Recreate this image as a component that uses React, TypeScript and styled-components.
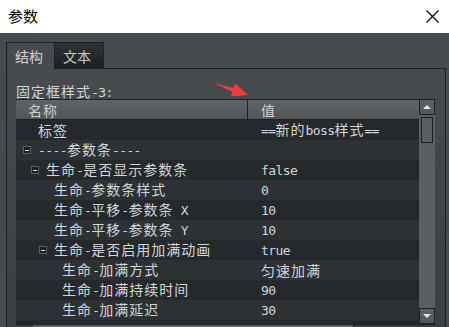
import React from 'react';
import styled, { createGlobalStyle } from 'styled-components';

const GlobalStyle = createGlobalStyle`
  html, body {
    margin: 0;
    padding: 0;
    background: #484b4e;
    overflow: hidden;
  }
`;

const Root = styled.div`
  position: relative;
  width: 449px;
  height: 327px;
  display: flex;
  flex-direction: column;
  overflow: hidden;
  background: #484b4e;
`;

const TitleBar = styled.div`
  height: 33px;
  flex: none;
  display: flex;
  align-items: center;
  justify-content: space-between;
  padding: 0 10px 0 8px;
  background: #fff;
`;

const Title = styled.span`
  font-family: 'Noto Sans CJK SC', sans-serif;
  font-size: 15px;
  color: #000;
  margin-top: -3px;
`;

const Body = styled.div`
  flex: 1;
  display: flex;
  flex-direction: column;
  padding: 9px 3px 0 6px;
  min-height: 0;
`;

const Tabs = styled.div`
  display: flex;
  align-items: flex-end;
  position: relative;
  z-index: 1;
`;

const Tab = styled.div<{ $active?: boolean }>`
  box-sizing: border-box;
  width: 49px;
  height: ${(p) => (p.$active ? 27 : 26)}px;
  margin-bottom: ${(p) => (p.$active ? -1 : 0)}px;
  padding-left: 8px;
  display: flex;
  align-items: center;
  border: 1px solid #1e2022;
  border-bottom: none;
  border-left-width: ${(p) => (p.$active ? 1 : 0)}px;
  background: ${(p) =>
    p.$active ? '#484b4e' : 'linear-gradient(#303336, #1d2022)'};
  font-family: 'Noto Sans CJK SC', sans-serif;
  font-size: 14px;
  color: ${(p) => (p.$active ? '#cfd2d5' : '#c6c9cc')};
`;

const Panel = styled.div`
  flex: 1;
  display: flex;
  flex-direction: column;
  padding: 15px 10px 0 9px;
  border: 1px solid #1e2022;
  border-bottom: none;
  background: linear-gradient(#484b4e, #3c3f42);
  min-height: 0;
`;

const Caption = styled.div`
  line-height: 15px;
  height: 15px;
  color: #d2d5d8;
  white-space: nowrap;
`;

const Table = styled.div`
  display: flex;
  flex-direction: column;
  width: 419px;
`;

const Viewport = styled.div`
  display: flex;
  height: 225px;
`;

const Main = styled.div`
  width: 403px;
  overflow: hidden;
  display: flex;
  flex-direction: column;
  background: #26292b;
`;

const HeaderRow = styled.div`
  flex: none;
  box-sizing: border-box;
  height: 21px;
  display: flex;
  border-top: 1px solid #1e2022;
  border-bottom: 1px solid #1e2022;
  background: linear-gradient(#616467, #525558);
`;

const HeadCell = styled.div<{ $width?: number; $pad: number }>`
  box-sizing: border-box;
  width: ${(p) => (p.$width ? `${p.$width}px` : 'auto')};
  flex: ${(p) => (p.$width ? 'none' : 1)};
  padding-left: ${(p) => p.$pad}px;
  display: flex;
  align-items: center;
  border-right: ${(p) => (p.$width ? '1px solid #1e2022' : 'none')};
  font-family: 'Noto Sans CJK SC', sans-serif;
  font-size: 14px;
  letter-spacing: 1px;
  color: #cdd0d3;
`;

const Row = styled.div<{ $alt: boolean }>`
  flex: none;
  height: 20px;
  display: flex;
  align-items: center;
  background: ${(p) => (p.$alt ? '#2e3134' : '#26292b')};
  color: #d2d6da;
  white-space: pre;
`;

const NameCell = styled.div<{ $depth: number }>`
  box-sizing: border-box;
  width: 232px;
  flex: none;
  display: flex;
  align-items: center;
  padding-left: ${(p) => 7 + p.$depth * 8}px;
`;

const Slot = styled.span`
  width: 15px;
  flex: none;
  display: flex;
  align-items: center;
`;

const Expander = styled.span`
  box-sizing: border-box;
  width: 8px;
  height: 8px;
  border: 1px solid #5d6063;
  background: #1b1d1f;
  display: flex;
  align-items: center;
  justify-content: center;
  &::after {
    content: '';
    width: 4px;
    height: 1px;
    background: #e6e6e6;
  }
`;

const Label = styled.span`
  line-height: 20px;
`;

const ValueCell = styled.div`
  flex: 1;
  padding-left: 13px;
  line-height: 20px;
`;

const Latin = styled.span`
  font-family: 'DejaVu Sans Mono', monospace;
  font-size: 13px;
  letter-spacing: -0.6px;
`;

const Han = styled.span`
  font-family: 'Noto Sans CJK SC', sans-serif;
  font-size: 14px;
  letter-spacing: 1px;
`;

const VScroll = styled.div`
  width: 16px;
  display: flex;
  flex-direction: column;
  background: #5c5f62;
`;

const ScrollButton = styled.div`
  box-sizing: border-box;
  width: 16px;
  height: 16px;
  flex: none;
  display: flex;
  align-items: center;
  justify-content: center;
  border: 1px solid #1e2022;
  background: linear-gradient(#5f6265, #54575a);
`;

const Arrowhead = styled.span<{ $down?: boolean }>`
  width: 0;
  height: 0;
  border-left: 4px solid transparent;
  border-right: 4px solid transparent;
  ${(p) =>
    p.$down ? 'border-top: 4px solid #e8e8e8;' : 'border-bottom: 4px solid #e8e8e8;'}
`;

const Track = styled.div`
  flex: 1;
  padding: 2px 2px 0;
`;

const Thumb = styled.div`
  box-sizing: border-box;
  height: 26px;
  border: 1px solid #1b1d1f;
  background: #5c5f62;
`;

const HScroll = styled.div`
  height: 16px;
  display: flex;
  border-top: 1px solid #1e2022;
  background: #3a3d40;
`;

const HThumb = styled.div`
  width: 320px;
  margin-left: 17px;
  background: #5c5f62;
  border-right: 1px solid #1e2022;
`;

const ArrowMark = styled.svg`
  position: absolute;
  left: 212px;
  top: 80px;
  pointer-events: none;
`;

const Mixed = ({ text }: { text: string }) => (
  <>
    {text
      .split(/([\x20-\x7e]+)/)
      .filter(Boolean)
      .map((part, i) =>
        /^[\x20-\x7e]+$/.test(part) ? (
          <Latin key={i}>{part}</Latin>
        ) : (
          <Han key={i}>{part}</Han>
        )
      )}
  </>
);

interface Param {
  name: string;
  value: string;
  depth: number;
  open?: boolean;
}

const params: Param[] = [
  { name: '标签', value: '==新的boss样式==', depth: 0 },
  { name: '----参数条----', value: '', depth: 0, open: true },
  { name: '生命-是否显示参数条', value: 'false', depth: 1, open: true },
  { name: '生命-参数条样式', value: '0', depth: 2 },
  { name: '生命-平移-参数条 X', value: '10', depth: 2 },
  { name: '生命-平移-参数条 Y', value: '10', depth: 2 },
  { name: '生命-是否启用加满动画', value: 'true', depth: 2, open: true },
  { name: '生命-加满方式', value: '匀速加满', depth: 3 },
  { name: '生命-加满持续时间', value: '90', depth: 3 },
  { name: '生命-加满延迟', value: '30', depth: 3 },
  { name: '', value: '', depth: 3 },
];

export default function App() {
  return (
    <Root>
      <GlobalStyle />
      <TitleBar>
        <Title>参数</Title>
        <svg width="13" height="13" viewBox="0 0 13 13">
          <path d="M0.5 0.5L12.5 12.5M12.5 0.5L0.5 12.5" stroke="#000" strokeWidth="1.2" />
        </svg>
      </TitleBar>
      <Body>
        <Tabs>
          <Tab $active>结构</Tab>
          <Tab>文本</Tab>
        </Tabs>
        <Panel>
          <Caption>
            <Mixed text="固定框样式-3:" />
          </Caption>
          <Table>
            <Viewport>
              <Main>
                <HeaderRow>
                  <HeadCell $width={232} $pad={12}>名称</HeadCell>
                  <HeadCell $pad={13}>值</HeadCell>
                </HeaderRow>
                {params.map((p, i) => (
                  <Row key={i} $alt={i % 2 === 1}>
                    <NameCell $depth={p.depth}>
                      <Slot>{p.open && <Expander />}</Slot>
                      <Label>
                        <Mixed text={p.name} />
                      </Label>
                    </NameCell>
                    <ValueCell>
                      <Mixed text={p.value} />
                    </ValueCell>
                  </Row>
                ))}
              </Main>
              <VScroll>
                <ScrollButton>
                  <Arrowhead />
                </ScrollButton>
                <Track>
                  <Thumb />
                </Track>
                <ScrollButton>
                  <Arrowhead $down />
                </ScrollButton>
              </VScroll>
            </Viewport>
            <HScroll>
              <HThumb />
            </HScroll>
          </Table>
        </Panel>
      </Body>
      <ArrowMark width="40" height="20" viewBox="212 80 40 20">
        <polygon
          points="214,83 233.4,88 235,83.3 248,95 230.6,96.5 232.2,91.8"
          fill="#f23b3b"
        />
      </ArrowMark>
    </Root>
  );
}
